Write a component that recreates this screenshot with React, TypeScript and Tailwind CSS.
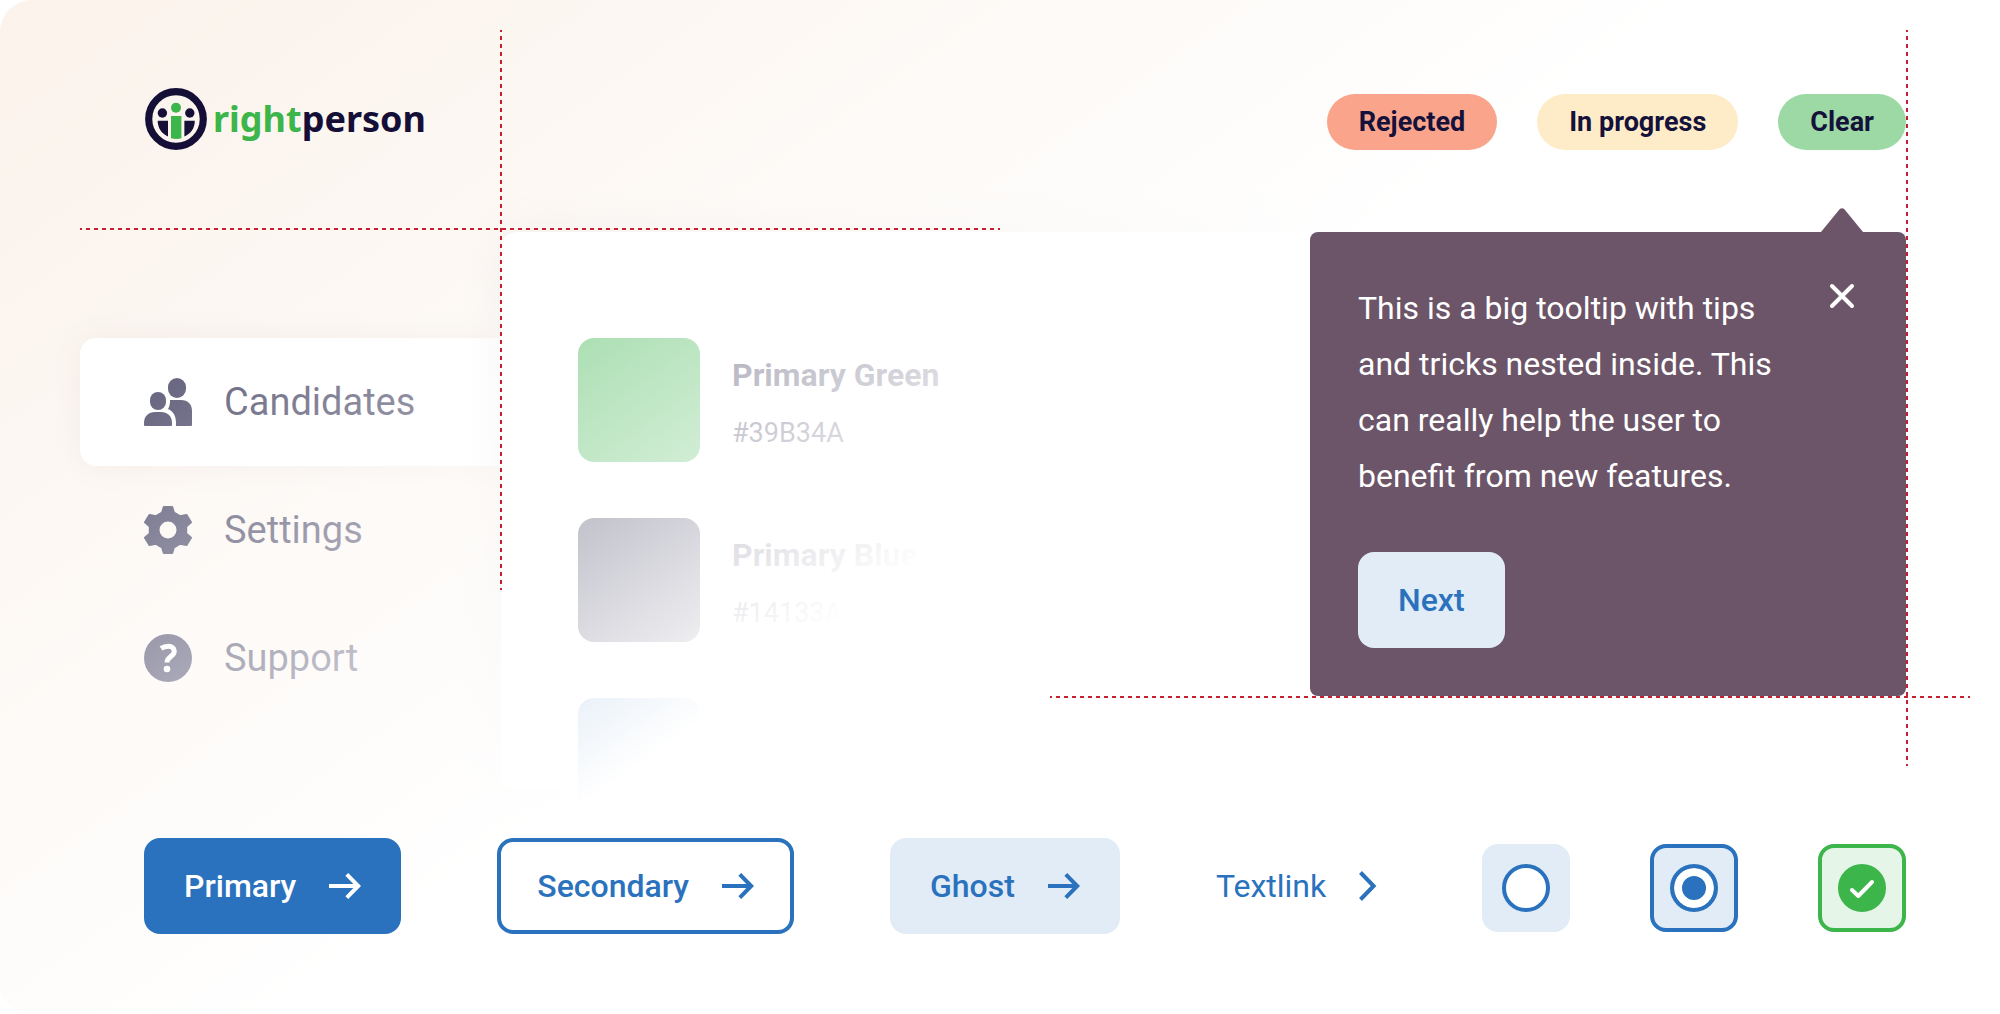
/**
 * @module App
 *
 * Component overview board for the rightperson design system.
 *
 * Responsibilities:
 * - Compose header, navigation, colour panel, tooltip and controls.
 * - Fade the lower layers towards white and keep the highlights on top.
 */

import React, { useState } from "react";

/** Single entry of the side navigation. */
interface NavItem {
    id: string;
    label: string;
    icon: JSX.Element;
}

/** Single colour shown in the colour panel. */
interface Swatch {
    className: string;
    /** Rows without a name show the colour tile only. */
    name?: string;
    hex?: string;
}

function PeopleIcon(): JSX.Element {
    return (
        <svg viewBox="0 0 48 48" className="size-12 shrink-0" fill="currentColor" aria-hidden="true">
            <rect x="24" y="0" width="18" height="20" rx="9" />
            <rect x="6" y="14" width="16" height="18" rx="8" />
            <path d="M0 45C0 38 4.5 34 11 34H17C23.5 34 28 38 28 45V47A1 1 0 0 1 27 48H1A1 1 0 0 1 0 47Z" />
            <path d="M26 22H37C44 22 48 26 48 33V47A1 1 0 0 1 47 48H32V45C32 38 29.5 33.5 24 31C25.6 28.5 26.2 25 26 22Z" />
        </svg>
    );
}

function GearIcon(): JSX.Element {
    return (
        <svg
            viewBox="-24 -24 48 48"
            className="size-12 shrink-0"
            fill="currentColor"
            stroke="currentColor"
            strokeWidth="2"
            strokeLinejoin="round"
            aria-hidden="true"
        >
            <path
                fillRule="evenodd"
                d="M-6 -17.3L-4.2 -23H4.2L6 -17.3L11.9 -13.8L18.4 -15.1L23 -7.8L18.2 -3.4V3.4L23 7.8L18.4 15.1L11.9 13.8L6 17.3L4.2 23H-4.2L-6 17.3L-11.9 13.8L-18.4 15.1L-23 7.8L-18.2 3.4V-3.4L-23 -7.8L-18.4 -15.1L-11.9 -13.8ZM9.5 0A9.5 9.5 0 1 0 -9.5 0A9.5 9.5 0 1 0 9.5 0Z"
            />
        </svg>
    );
}

function HelpIcon(): JSX.Element {
    return (
        <svg viewBox="0 0 48 48" className="size-12 shrink-0" aria-hidden="true">
            <circle cx="24" cy="24" r="24" fill="currentColor" />
            <path
                d="M17 14.4C19.6 12.7 22 12.2 24.3 12.2C28 12.2 30.3 14.2 30.3 17.2C30.3 22.4 23 22.6 23 28.4"
                fill="none"
                stroke="white"
                strokeWidth="5"
            />
            <circle cx="23" cy="35" r="3.3" fill="white" />
        </svg>
    );
}

function ArrowIcon(): JSX.Element {
    return (
        <svg viewBox="0 0 32 32" className="size-8 shrink-0" fill="none" stroke="currentColor" strokeWidth="4" aria-hidden="true">
            <path d="M0 16H29M17.8 4.4L29.2 16L17.8 27.6" />
        </svg>
    );
}

function ChevronIcon(): JSX.Element {
    return (
        <svg viewBox="0 0 20 32" className="h-8 w-5 shrink-0" fill="none" stroke="currentColor" strokeWidth="4" aria-hidden="true">
            <path d="M1.5 2.5L14.6 16L1.5 29.5" />
        </svg>
    );
}

function Logo(): JSX.Element {
    return (
        <a href="#" className="flex items-center gap-1.5" aria-label="rightperson">
            <svg viewBox="0 0 62 62" className="size-[62px]" fill="#150f37" aria-hidden="true">
                <circle cx="31" cy="31" r="27.3" fill="none" stroke="#150f37" strokeWidth="7.2" />
                <circle cx="17.4" cy="25" r="4.7" />
                <circle cx="44.8" cy="25" r="4.7" />
                <path d="M12.7 32.7H23V48.6C16.5 45.4 12.7 40 12.7 32.7Z" />
                <path d="M39.4 32.7H49.8C49.8 40 46 45.4 39.4 48.6Z" />
                <circle cx="31" cy="19.8" r="5" fill="#3cb54a" />
                <path d="M26 28H36.4V50.2Q31.2 51.6 26 50.2Z" fill="#3cb54a" />
            </svg>
            <span className="font-['Noto_Sans',sans-serif] text-4xl font-bold text-[#150f37]">
                <span className="text-[#3cb54a]">right</span>person
            </span>
        </a>
    );
}

const NAV_ITEMS: NavItem[] = [
    { id: "candidates", label: "Candidates", icon: <PeopleIcon /> },
    { id: "settings", label: "Settings", icon: <GearIcon /> },
    { id: "support", label: "Support", icon: <HelpIcon /> },
];

const SWATCHES: Swatch[] = [
    { className: "bg-[#39b34a]", name: "Primary Green", hex: "#39B34A" },
    { className: "bg-[#14133a]", name: "Primary Blue", hex: "#14133A" },
    { className: "bg-[#2a72bd]" },
];

const TAGS = [
    { label: "Rejected", className: "bg-[#faa48c]" },
    { label: "In progress", className: "bg-[#feecc9]" },
    { label: "Clear", className: "bg-[#9cd9a5]" },
];

/** Dashed red guide lines that mark the layout grid. */
function Guides(): JSX.Element {
    const horizontal =
        "absolute h-0.5 bg-[repeating-linear-gradient(90deg,#c4202f_0_2px,transparent_2px_6px,#c4202f_6px_8px)]";
    const vertical =
        "absolute w-0.5 bg-[repeating-linear-gradient(180deg,#c4202f_0_2px,transparent_2px_6px,#c4202f_6px_8px)]";

    return (
        <div className="pointer-events-none absolute inset-0 z-30" aria-hidden="true">
            <div className={`${horizontal} top-[228px] left-20 w-[920px]`} />
            <div className={`${horizontal} top-[696px] right-[30px] w-[920px]`} />
            <div className={`${vertical} top-[30px] left-[500px] h-[560px]`} />
            <div className={`${vertical} top-[30px] right-[92px] h-[736px]`} />
        </div>
    );
}

/**
 * Tooltip with a close and a next action.
 *
 * @param props.onClose - Called when the tooltip is dismissed.
 */
function Tooltip({ onClose }: { onClose: () => void }): JSX.Element {
    return (
        <aside
            role="tooltip"
            className="absolute top-0 right-0 z-20 w-[596px] rounded-lg bg-[#6c5568] p-12 text-white"
        >
            <svg viewBox="0 0 42 24" className="absolute right-[43px] bottom-full h-6 w-[42px]" fill="#6c5568" aria-hidden="true">
                <path d="M0 24L18.4 1.6Q21 -1 23.6 1.6L42 24Z" />
            </svg>
            <div className="flex items-start justify-between gap-8">
                <p className="w-[430px] text-[32px] leading-14">
                    This is a big tooltip with tips and tricks nested inside.
                    This can really help the user to benefit from new features.
                </p>
                <button type="button" onClick={onClose} aria-label="Close" className="cursor-pointer">
                    <svg
                        viewBox="0 0 32 32"
                        className="size-8"
                        fill="none"
                        stroke="currentColor"
                        strokeWidth="4"
                        strokeLinecap="round"
                        aria-hidden="true"
                    >
                        <path d="M6 6L26 26M26 6L6 26" />
                    </svg>
                </button>
            </div>
            <button
                type="button"
                className="mt-12 h-24 cursor-pointer rounded-2xl bg-[#e2ecf6] px-10 text-[32px] font-medium text-[#2a72bd]"
            >
                Next
            </button>
        </aside>
    );
}

/**
 * Component overview page.
 *
 * @returns Board UI.
 */
export default function App(): JSX.Element {
    const [activeId, setActiveId] = useState<string>("candidates");
    const [tooltipOpen, setTooltipOpen] = useState<boolean>(true);

    const button =
        "flex h-24 cursor-pointer items-center gap-[33px] rounded-2xl text-[32px] font-medium";
    const choice =
        "grid size-22 cursor-pointer place-items-center rounded-2xl";

    return (
        <div className="relative min-h-screen overflow-hidden rounded-l-[32px] bg-[#fbf3ec] font-[Roboto,sans-serif] text-[#14113a]">
            <div
                className="pointer-events-none absolute inset-0 z-10 bg-[linear-gradient(144.5deg,rgba(255,255,255,0)_4%,#ffffff_50%)]"
                aria-hidden="true"
            />
            <Guides />

            <header className="relative z-20 flex items-end justify-between pt-[88px] pr-[94px] pl-[145px]">
                <Logo />
                <ul className="flex gap-10">
                    {TAGS.map((tag) => (
                        <li
                            key={tag.label}
                            className={`flex h-14 items-center rounded-full px-8 text-[27px] font-bold ${tag.className}`}
                        >
                            {tag.label}
                        </li>
                    ))}
                </ul>
            </header>

            <main className="mt-[82px] flex pr-[94px] pl-20">
                <nav className="w-[421px] shrink-0 pt-[106px]">
                    {NAV_ITEMS.map((item) => (
                        <a
                            key={item.id}
                            href={`#${item.id}`}
                            onClick={() => setActiveId(item.id)}
                            className={`flex h-32 items-center gap-8 rounded-l-2xl pl-16 text-[38px] ${
                                item.id === activeId
                                    ? "bg-white shadow-[0_0_32px_rgba(60,20,10,0.07)]"
                                    : ""
                            }`}
                        >
                            {item.icon}
                            {item.label}
                        </a>
                    ))}
                </nav>

                <div className="relative flex-1">
                    <section className="h-[558px] rounded-2xl bg-white shadow-[0_0_48px_rgba(20,17,58,0.08)]">
                        <ul className="flex flex-col gap-14 pt-[106px] pl-[77px]">
                            {SWATCHES.map((swatch) => (
                                <li key={swatch.className} className="flex gap-8">
                                    <div className={`h-[124px] w-[122px] rounded-2xl ${swatch.className}`} />
                                    {swatch.name ? (
                                        <div className="pt-4">
                                            <h3 className="text-[32px] leading-[42px] font-bold">
                                                {swatch.name}
                                            </h3>
                                            <p className="mt-4 text-[27px] leading-[42px]">
                                                {swatch.hex}
                                            </p>
                                        </div>
                                    ) : null}
                                </li>
                            ))}
                        </ul>
                    </section>
                    {tooltipOpen ? (
                        <Tooltip onClose={() => setTooltipOpen(false)} />
                    ) : null}
                </div>
            </main>

            <footer className="relative z-20 mt-12 flex items-center gap-24 pr-[94px] pb-20 pl-36">
                <button type="button" className={`${button} bg-[#2a72bd] px-10 text-white`}>
                    Primary
                    <ArrowIcon />
                </button>
                <button type="button" className={`${button} border-4 border-[#2a72bd] bg-white px-9 text-[#2a72bd]`}>
                    Secondary
                    <ArrowIcon />
                </button>
                <button type="button" className={`${button} bg-[#e2ecf6] px-10 text-[#2a72bd]`}>
                    Ghost
                    <ArrowIcon />
                </button>
                <a href="#textlink" className="flex items-center gap-[33px] text-[32px] text-[#2a72bd]">
                    Textlink
                    <ChevronIcon />
                </a>
                <div className="mt-1 ml-auto flex items-center gap-20">
                    <label className={`${choice} bg-[#e2ecf6]`}>
                        <input
                            type="radio"
                            name="choice"
                            aria-label="Unselected option"
                            className="size-12 appearance-none rounded-full border-4 border-[#2a72bd] bg-white checked:bg-[#2a72bd] checked:shadow-[inset_0_0_0_8px_#ffffff]"
                        />
                    </label>
                    <label className={`${choice} border-4 border-[#2a72bd] bg-[#e2ecf6]`}>
                        <input
                            type="radio"
                            name="choice"
                            defaultChecked
                            aria-label="Selected option"
                            className="size-12 appearance-none rounded-full border-4 border-[#2a72bd] bg-white checked:bg-[#2a72bd] checked:shadow-[inset_0_0_0_8px_#ffffff]"
                        />
                    </label>
                    <label className={`${choice} border-4 border-[#3cb54a] bg-[#e5f5e7]`}>
                        <input
                            type="checkbox"
                            defaultChecked
                            aria-label="Confirmed"
                            className="peer col-start-1 row-start-1 size-12 appearance-none rounded-full border-4 border-[#3cb54a] bg-white checked:bg-[#3cb54a]"
                        />
                        <svg
                            viewBox="0 0 48 48"
                            className="pointer-events-none invisible col-start-1 row-start-1 size-12 peer-checked:visible"
                            fill="none"
                            stroke="white"
                            strokeWidth="4"
                            strokeLinecap="round"
                            strokeLinejoin="round"
                            aria-hidden="true"
                        >
                            <path d="M14 26L20.3 32L34 18" />
                        </svg>
                    </label>
                </div>
            </footer>
        </div>
    );
}
